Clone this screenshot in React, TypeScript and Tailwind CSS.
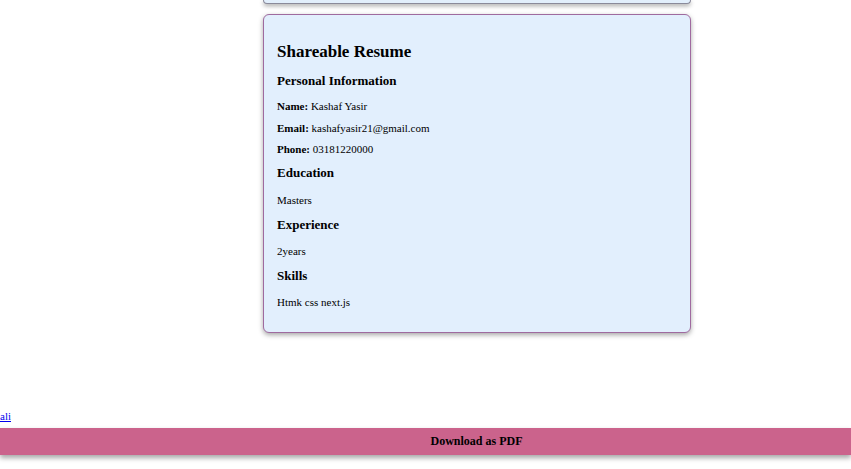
const serif = "font-['Liberation_Serif','Times_New_Roman',serif]"

const Field = ({ label, value }: { label: string; value: string }) => (
  <p className="text-[11px] leading-[13px] mb-[8.5px]">
    <b>{label}:</b> {value}
  </p>
)

export default function App() {
  return (
    <div className={`${serif} text-black bg-white w-[851px] h-[469px] overflow-hidden`}>
      <div className="w-[428px] ml-[263px]">
        <div className="h-[4px] rounded-b-md border-x border-b border-[#8a8a9a] bg-[#e2effc] shadow-[0_2px_4px_rgba(0,0,0,0.35)]" />
        <div className="mt-[10px] rounded-md border border-[#9f6a9f] bg-[#e2effd] shadow-[0_2px_5px_rgba(0,0,0,0.35)] px-[13px] pt-[27px] pb-[23px]">
          <h2 className="text-[17px] leading-[20px] font-bold">Shareable Resume</h2>
          <h3 className="mt-[11px] mb-[11px] text-[13px] leading-[16px] font-bold">Personal Information</h3>
          <Field label="Name" value="Kashaf Yasir" />
          <Field label="Email" value="kashafyasir21@gmail.com" />
          <Field label="Phone" value="03181220000" />
          <h3 className="mt-[2.5px] text-[13px] leading-[16px] font-bold">Education</h3>
          <p className="mt-[13px] text-[11px] leading-[13px]">Masters</p>
          <h3 className="mt-[10px] text-[13px] leading-[16px] font-bold">Experience</h3>
          <p className="mt-[12px] text-[11px] leading-[13px]">2years</p>
          <h3 className="mt-[10px] text-[13px] leading-[16px] font-bold">Skills</h3>
          <p className="mt-[12px] text-[11px] leading-[13px]">Htmk css next.js</p>
        </div>
      </div>
      <div className="mt-[77px] text-[11px] leading-[13px]">
        <a href="#" className="text-[#0000ee] underline">ali</a>
      </div>
      <div className="mt-[5px] h-[27px] bg-[#cb638c] flex items-center justify-center pl-[102px] shadow-[0_3px_5px_rgba(0,0,0,0.35)]">
        <span className="text-[12px] font-bold">Download as PDF</span>
      </div>
    </div>
  )
}
